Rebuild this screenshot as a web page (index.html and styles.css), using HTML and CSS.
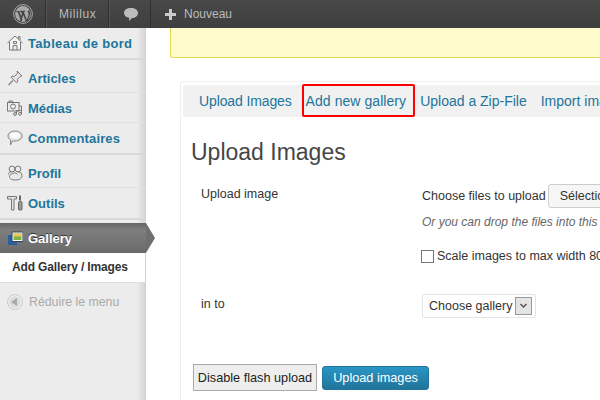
FILE: index.html
```html
<!DOCTYPE html>
<html lang="fr">
<head>
<meta charset="utf-8">
<title>Upload Images</title>
<link rel="stylesheet" href="styles.css">
</head>
<body>
<header class="topbar">
  <div class="top-item top-logo">
    <svg width="20" height="20" viewBox="0 0 20 20"><circle cx="10" cy="10" r="9.400" fill="none" stroke="#aaa" stroke-width="1"/><circle cx="10" cy="10" r="7.900" fill="#aaa"/><path d="M2.900 7h3.300l3.200 8.800-1 2.100L4.700 7.900 3 7.700zM6.800 6.800h5.300v.9l-1.200.2 2.900 8 1.700-5.200c.4-1.300-.6-2.500-.9-3.200l1.600-1.500 1.200 3.300-3 8.700h-1.300L10.200 11l-2.300 6.800-1-2 2-5.700-.9-2.300-1.200-.1z" fill="#464646"/></svg>
  </div>
  <div class="top-item top-site">Mililux</div>
  <div class="top-item top-comment">
    <svg width="16" height="15" viewBox="0 0 16 15"><path d="M8 1c4 0 7 1.900 7 5s-3 5-6 5l-3 3 .2-3.200C3 10.300 1 8.600 1 6c0-3.100 3-5 7-5z" fill="#bbb"/></svg>
  </div>
  <div class="top-item top-new"><span class="plus"></span>Nouveau</div>
</header>
<div class="layout">
  <nav class="sidebar">
    <ul class="menu-group">
      <li class="menu-item"><svg class="mi" viewBox="0 0 16 16"><path d="M.5 8L8 1l7.500 7M2.500 7v8h11V7M6 15v-4.500h4V15M6.500 6.500h3v2h-3zM11.500 3.500V1.500h1.500v3.500" fill="#f4f4f4" stroke="#777"/></svg><span class="wide">Tableau de bord</span></li>
    </ul>
    <ul class="menu-group">
      <li class="menu-item"><svg class="mi" viewBox="0 0 16 16"><path d="M10 1l5 5-1.500.3-3 3 .2 2.500-1 1L4 7.200l1-1 2.500.2 3-3z" fill="#e4e4e4" stroke="#777"/><path d="M6 10.500L1.500 15" stroke="#888" stroke-width="1.500"/></svg>Articles</li>
      <li class="menu-item"><svg class="mi" viewBox="0 0 16 16"><rect x=".5" y="2.500" width="11.500" height="8.500" fill="none" stroke="#777"/><path d="M2 2.500v-1.500h3.500v1.500" fill="none" stroke="#777"/><circle cx="6" cy="6.500" r="2.500" fill="none" stroke="#777"/><circle cx="8" cy="14" r="1.400" fill="none" stroke="#777"/><circle cx="13" cy="13.800" r="1.400" fill="none" stroke="#777"/><path d="M9.500 14v-3.500h5V13.800M12 6h2.500v4.500" fill="none" stroke="#777"/></svg>Médias</li>
      <li class="menu-item"><svg class="mi" viewBox="0 0 16 16"><path d="M8 1c4 0 7 2 7 5s-3 5-7 5H5.500L3.500 15v-5.200C1.900 8.900 1 7.600 1 6c0-3 3-5 7-5z" fill="#e6e6e6" stroke="#888"/><ellipse cx="8" cy="5.500" rx="5" ry="3" fill="#fafafa"/></svg><span class="wider">Commentaires</span></li>
    </ul>
    <ul class="menu-group">
      <li class="menu-item"><svg class="mi" viewBox="0 0 16 16"><circle cx="5" cy="4" r="2.900" fill="none" stroke="#777"/><circle cx="11" cy="4" r="2.900" fill="none" stroke="#777"/><path d="M1.500 9.500c0-2 1.500-3 3.500-2.700M10.500 7c2.500-.5 4.500 1 4.500 4 0 2.500-2.500 4-6.500 4C4 15 2 13 2.500 11.500c.5-2 2.500-3.500 5-3.500 1.500 0 2.500.5 3 1.500" fill="#e8e8e8" stroke="#777"/></svg>Profil</li>
      <li class="menu-item"><svg class="mi" viewBox="0 0 16 16"><path d="M.5 1.500h9v2.500H7v11H4.500V4H.5z" fill="#e4e4e4" stroke="#777"/><path d="M13 .5v5" stroke="#666" stroke-width="2"/><rect x="11.500" y="6.500" width="3.500" height="8.500" rx="1" fill="#999" stroke="#666"/></svg>Outils</li>
    </ul>
    <div class="gallery-head">
      <svg class="mi" viewBox="0 0 16 16"><rect x="1" y="5" width="9" height="10" fill="#2b5f9e"/><rect x="5" y="2" width="11" height="9.500" fill="#fff" stroke="#345"/><rect x="6.500" y="3.500" width="8" height="6.500" fill="#7cb342"/><rect x="6.500" y="3.500" width="8" height="3" fill="#e8c85a"/></svg>Gallery
    </div>
    <div class="submenu">Add Gallery / Images</div>
    <div class="collapse"><span class="collapse-btn"></span>Réduire le menu</div>
  </nav>
  <main class="content">
    <div class="notice"></div>
    <section class="panel">
      <div class="tabs">
        <a class="tab tab-first">Upload Images</a>
        <a class="tab tab-marked">Add new gallery</a>
        <a class="tab">Upload a Zip-File</a>
        <a class="tab">Import image folder</a>
      </div>
      <h2 class="title">Upload Images</h2>
      <div class="form-grid">
        <div class="label label-first">Upload image</div>
        <div class="field">
          <div class="file-row">Choose files to upload <button class="file-btn">Sélectionner des fichiers</button></div>
          <p class="hint">Or you can drop the files into this window.</p>
          <label class="scale"><span class="check"></span>Scale images to max width 800px</label>
        </div>
        <div class="label label-second">in to</div>
        <div class="field field-select">
          <span class="select">Choose gallery<span class="arrow"><svg width="9" height="6" viewBox="0 0 9 6"><path d="M1.500 1l3 3 3-3" fill="none" stroke="#555" stroke-width="1.500"/></svg></span></span>
        </div>
      </div>
      <div class="actions">
        <button class="btn-plain">Disable flash upload</button>
        <button class="btn-primary">Upload images</button>
      </div>
    </section>
  </main>
</div>
</body>
</html>
```
FILE: styles.css
```css
* { box-sizing: border-box; }
html, body { margin: 0; padding: 0; width: 600px; height: 400px; overflow: hidden; background: #fff; }
body { font-family: "Liberation Sans", Arial, sans-serif; font-size: 12.5px; color: #333; }
ul { list-style: none; margin: 0; padding: 0; }

.topbar { display: flex; height: 28px; background: linear-gradient(#484848, #3f3f3f); color: #bbb; align-items: stretch; }
.top-item { display: flex; align-items: center; border-right: 1px solid #2f2f2f; border-left: 1px solid #555; font-size: 12px; }
.top-logo { width: 46px; justify-content: center; border-left: 0; }
.top-site { width: 63px; padding-left: 12px; font-size: 12px; letter-spacing: .55px; }
.top-comment { width: 42px; justify-content: center; padding-left: 1px; }
.top-new { border: 0; padding-left: 14px; }
.plus { width: 11px; height: 11px; margin-right: 8px; background: linear-gradient(#ccc, #ccc) center/11px 3px no-repeat, linear-gradient(#ccc, #ccc) center/3px 11px no-repeat; }

.layout { display: flex; height: 372px; overflow: hidden; }
.sidebar { width: 146px; flex: none; background: #ececec linear-gradient(90deg, #ececec 137px, #d2d2d2 146px); }
.menu-group { border-bottom: 2px solid #d8d8d8; margin-bottom: 3px; }
.menu-item { display: flex; align-items: center; height: 30px; padding-left: 7px; font-size: 13px; font-weight: bold; color: #21759b; box-shadow: inset 0 -1px 0 #e0e0e0; }
.menu-item:last-child { box-shadow: none; }
.wide { letter-spacing: .33px; }
.wider { letter-spacing: .15px; }
.mi { width: 16px; height: 16px; margin-right: 5px; flex: none; }
.gallery-head { position: relative; display: flex; align-items: center; height: 30px; width: 146px; padding-left: 7px; font-size: 13px; font-weight: bold; color: #fff; background: linear-gradient(#666, #7e7e7e 25%, #6a6a6a); text-shadow: 0 -1px 0 #333; }
.gallery-head::after { content: ""; position: absolute; left: 146px; top: 0; border-left: 9px solid #6f6f6f; border-top: 15px solid transparent; border-bottom: 15px solid transparent; }
.submenu { height: 30px; width: 145px; padding-top: 7px; padding-left: 12px; background: #fff; font-size: 12px; font-weight: bold; letter-spacing: -.15px; color: #333; border-bottom: 1px solid #ddd; }
.collapse { display: flex; align-items: center; margin-top: 11px; padding-left: 7px; color: #aaa; font-size: 12.3px; }
.collapse-btn { position: relative; width: 16px; height: 16px; margin-right: 6px; border-radius: 50%; background: #ddd; border: 1px solid #ccc; box-shadow: inset 0 0 0 1px #f4f4f4; }
.collapse-btn::after { content: ""; position: absolute; left: 3px; top: 3px; border-right: 6px solid #aaa; border-top: 4px solid transparent; border-bottom: 4px solid transparent; }

.content { flex: 1; min-width: 0; padding-left: 24px; }
.notice { height: 30px; background: #fffbcc; border: 1px solid #e6db55; border-top: 0; border-right: 0; border-radius: 0 0 0 3px; }
.panel { margin: 23px 0 0 10px; height: 320px; padding: 3px 0 0 2px; border-left: 1px solid #eee; border-top: 1px solid #eee; border-radius: 3px 0 0 0; }
.tabs { display: flex; height: 32px; padding-left: 9px; background: #f1f1f1; border-radius: 3px 0 0 3px; white-space: nowrap; }
.tab { display: flex; align-items: center; padding: 0 7px; font-size: 14px; color: #21759b; }
.tab-first { letter-spacing: -.12px; padding-right: 10px; }
.tab-marked { height: 33px; margin-top: -1px; padding: 1px 9px 0 4px; box-shadow: inset 0 0 0 2px #f00; border-radius: 2px; letter-spacing: .06px; }
.tab-marked + .tab { padding-left: 5px; }
.title { margin: 20px 0 0 8px; font-size: 23px; font-weight: normal; line-height: 30px; color: #464646; }
.form-grid { display: grid; grid-template-columns: 221px 1fr; margin: 17px 0 0 8px; white-space: nowrap; }
.label { padding: 3px 0 0 10px; }
.field { padding-left: 10px; min-width: 0; }
.file-row { display: flex; align-items: center; height: 24px; }
.file-btn { margin-left: 2px; height: 24px; width: 160px; text-align: left; padding: 0 11px; background: #f6f6f6; border: 1px solid #ccc; border-radius: 3px; font: 12.5px "Liberation Sans", Arial, sans-serif; color: #333; flex: none; }
.hint { margin: 7px 0 0; font-size: 12px; font-style: italic; color: #666; }
.scale { display: flex; align-items: center; margin-top: 20px; height: 14px; margin-left: -1px; }
.check { flex: none; width: 13px; height: 13px; margin-right: 3px; border: 1px solid #777; background: #fff; }
.field-select { padding-top: 31px; grid-column: 2; }
.label-second { padding-top: 34px; }
.select { display: inline-flex; align-items: center; width: 114px; height: 24px; padding-left: 6px; border: 1px solid #e4e4e4; border-radius: 2px; background: #fff; }
.arrow { display: flex; align-items: center; justify-content: center; width: 17px; height: 18px; margin-left: 3px; background: #e4e4e4; border: 1px solid #999; }
.actions { display: flex; align-items: center; gap: 5px; margin: 46px 0 0 10px; }
.btn-plain { height: 27px; width: 124px; padding: 0; background: #eee; border: 1px solid #aaa; font: 12.7px "Liberation Sans", Arial, sans-serif; color: #222; }
.btn-primary { height: 24px; width: 107px; padding: 0; background: linear-gradient(#2a95c5, #21759b); border: 1px solid #21759b; border-radius: 3px; font: 12.7px "Liberation Sans", Arial, sans-serif; color: #fff; }
```
